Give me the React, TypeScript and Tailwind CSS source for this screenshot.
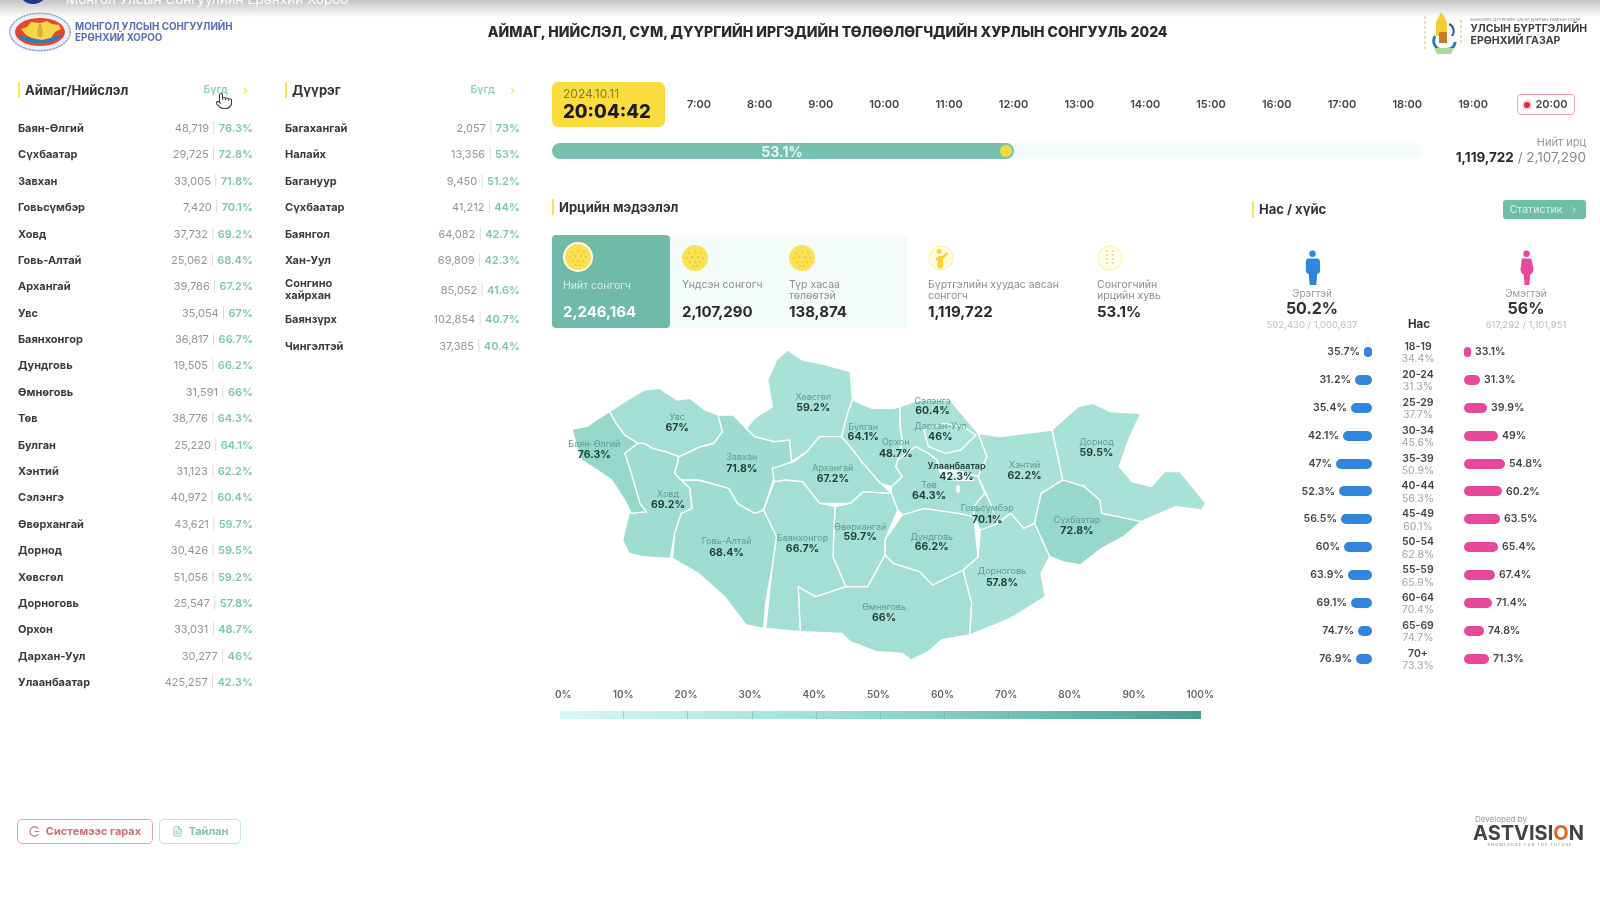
import { ChevronRight, FileText, Pointer } from "lucide-react"

const aimags = [
  ["Баян-Өлгий", "48,719", "76.3%"], ["Сүхбаатар", "29,725", "72.8%"], ["Завхан", "33,005", "71.8%"],
  ["Говьсүмбэр", "7,420", "70.1%"], ["Ховд", "37,732", "69.2%"], ["Говь-Алтай", "25,062", "68.4%"],
  ["Архангай", "39,786", "67.2%"], ["Увс", "35,054", "67%"], ["Баянхонгор", "36,817", "66.7%"],
  ["Дундговь", "19,505", "66.2%"], ["Өмнөговь", "31,591", "66%"], ["Төв", "38,776", "64.3%"],
  ["Булган", "25,220", "64.1%"], ["Хэнтий", "31,123", "62.2%"], ["Сэлэнгэ", "40,972", "60.4%"],
  ["Өвөрхангай", "43,621", "59.7%"], ["Дорнод", "30,426", "59.5%"], ["Хөвсгөл", "51,056", "59.2%"],
  ["Дорноговь", "25,547", "57.8%"], ["Орхон", "33,031", "48.7%"], ["Дархан-Уул", "30,277", "46%"],
  ["Улаанбаатар", "425,257", "42.3%"],
]

const districts = [
  ["Багахангай", "2,057", "73%"], ["Налайх", "13,356", "53%"], ["Багануур", "9,450", "51.2%"],
  ["Сүхбаатар", "41,212", "44%"], ["Баянгол", "64,082", "42.7%"], ["Хан-Уул", "69,809", "42.3%"],
  ["Сонгино хайрхан", "85,052", "41.6%"], ["Баянзүрх", "102,854", "40.7%"], ["Чингэлтэй", "37,385", "40.4%"],
]

const hours = ["7:00", "8:00", "9:00", "10:00", "11:00", "12:00", "13:00", "14:00", "15:00", "16:00", "17:00", "18:00", "19:00"]

const ages = [
  { m: "35.7%", mw: 8, a: "18-19", t: "34.4%", f: "33.1%", fw: 7 },
  { m: "31.2%", mw: 17, a: "20-24", t: "31.3%", f: "31.3%", fw: 16 },
  { m: "35.4%", mw: 21, a: "25-29", t: "37.7%", f: "39.9%", fw: 23 },
  { m: "42.1%", mw: 29, a: "30-34", t: "45.6%", f: "49%", fw: 34 },
  { m: "47%", mw: 36, a: "35-39", t: "50.9%", f: "54.8%", fw: 41 },
  { m: "52.3%", mw: 33, a: "40-44", t: "56.3%", f: "60.2%", fw: 38 },
  { m: "56.5%", mw: 31, a: "45-49", t: "60.1%", f: "63.5%", fw: 36 },
  { m: "60%", mw: 28, a: "50-54", t: "62.8%", f: "65.4%", fw: 34 },
  { m: "63.9%", mw: 24, a: "55-59", t: "65.9%", f: "67.4%", fw: 31 },
  { m: "69.1%", mw: 21, a: "60-64", t: "70.4%", f: "71.4%", fw: 28 },
  { m: "74.7%", mw: 14, a: "65-69", t: "74.7%", f: "74.8%", fw: 20 },
  { m: "76.9%", mw: 16, a: "70+", t: "73.3%", f: "71.3%", fw: 25 },
]

// map points are read off the zoomed crop (x / 2.306, y / 3)
const regions = [
  { fill: "#a8e2d7", d: "1155,270 1215,200 1250,190 1290,215 1360,220 1335,290 1310,380 1340,425 1385,440 1415,395 1450,395 1510,490 1500,510 1440,500 1360,545 1270,520 1265,480 1230,440 1180,420 1165,330" },
  { fill: "#96d8ca", d: "1180,420 1230,440 1265,480 1270,520 1360,545 1320,590 1270,625 1220,675 1180,665 1150,650 1115,550 1130,460" },
  { fill: "#a8e2d7", d: "985,280 1035,290 1155,270 1165,330 1180,420 1130,460 1115,550 1090,565 1060,520 1030,550 1010,480 985,410 1005,350" },
  { fill: "#a8e2d7", d: "1090,565 1115,550 1150,650 1130,700 1140,770 1060,835 965,885 970,790 950,690 985,650 990,570 1030,550 1060,520" },
  { fill: "#a3dfd3", d: "570,740 610,770 680,740 730,740 770,645 790,670 850,695 880,735 950,690 970,790 965,885 900,900 870,935 830,960 810,940 750,935 690,905 670,880 575,875" },
  { fill: "#a3dfd3", d: "810,525 860,505 940,520 975,530 985,650 950,690 880,735 850,695 790,670 770,645 770,600" },
  { fill: "#a5e0d4", d: "655,500 690,490 720,455 785,460 800,510 770,600 770,645 730,740 680,740 650,650" },
  { fill: "#a3dfd3", d: "490,510 515,425 540,420 580,425 620,490 655,500 650,650 680,740 610,770 570,740 575,875 495,865 510,680 520,590" },
  { fill: "#a0ddd1", d: "300,420 340,420 370,430 410,445 430,490 470,520 490,510 520,590 510,680 495,790 490,865 450,855 400,770 340,700 280,655 285,580 300,520 325,505 320,445" },
  { fill: "#9edccf", d: "385,225 420,225 450,265 470,290 515,305 550,300 555,365 520,385 510,430 490,510 470,520 430,490 410,445 370,430 340,420 300,420 285,400 295,350 345,320 375,310 395,275" },
  { fill: "#a0ddd1", d: "170,340 200,310 215,310 235,325 265,335 295,350 285,400 300,420 320,445 325,505 300,520 285,580 275,655 210,650 180,640 165,600 180,520 220,515 205,490 185,400" },
  { fill: "#a3dfd3", d: "135,215 170,185 215,150 250,145 290,180 320,175 355,210 385,225 395,275 375,310 345,320 295,350 265,335 235,325 215,310 200,310 170,285 150,250" },
  { fill: "#95d8c9", d: "48,268 85,258 110,235 135,215 150,250 170,285 200,310 170,340 185,400 205,490 220,515 185,520 170,480 140,420 100,385 70,360 60,320" },
  { fill: "#a8e2d7", d: "450,265 470,235 510,200 500,120 520,60 545,30 580,60 620,70 690,95 695,180 685,215 670,290 620,290 590,335 555,365 550,300 515,305 470,290" },
  { fill: "#a3dfd3", d: "510,385 560,365 590,335 620,290 670,290 690,320 720,370 760,430 785,460 720,455 690,490 620,490 580,425 540,420 515,425" },
  { fill: "#a5e0d4", d: "695,180 740,205 790,205 805,200 805,260 810,300 800,360 795,380 810,410 785,440 760,430 720,370 690,320 670,290 685,215" },
  { fill: "#a8e2d7", d: "805,200 850,180 920,180 985,280 1005,350 985,410 945,395 895,390 890,360 870,340 840,320 800,360 810,300 805,260" },
  { fill: "#ade4d9", d: "860,270 905,250 950,260 980,285 945,330 910,340 870,320" },
  { fill: "#a5e0d4", d: "785,440 810,410 795,380 800,360 840,320 870,340 890,360 895,390 945,395 985,410 1000,460 975,500 975,530 940,520 860,505 810,525 800,510 785,460" },
  { fill: "#dff5f0", d: "895,390 945,395 975,420 955,422 905,418" },
  { fill: "#9edccf", d: "975,500 1000,460 1010,480 1030,550 990,570 975,530" },
]

const labels = [
  ["Баян-Өлгий", "76.3%", 100, 310, 342], ["Увс", "67%", 291, 228, 262], ["Ховд", "69.2%", 270, 460, 492],
  ["Завхан", "71.8%", 440, 350, 384], ["Говь-Алтай", "68.4%", 405, 602, 636], ["Хөвсгөл", "59.2%", 605, 170, 203],
  ["Булган", "64.1%", 720, 258, 290], ["Сэлэнгэ", "60.4%", 880, 180, 212], ["Дархан-Уул", "46%", 898, 256, 288],
  ["Орхон", "48.7%", 795, 305, 340], ["Архангай", "67.2%", 650, 383, 416], ["Төв", "64.3%", 872, 432, 466],
  ["Говьсүмбэр", "70.1%", 1006, 503, 537], ["Хэнтий", "62.2%", 1092, 373, 406], ["Дорнод", "59.5%", 1258, 305, 338],
  ["Сүхбаатар", "72.8%", 1213, 538, 572], ["Баянхонгор", "66.7%", 580, 592, 624], ["Өвөрхангай", "59.7%", 713, 558, 590],
  ["Дундговь", "66.2%", 878, 588, 620], ["Дорноговь", "57.8%", 1040, 692, 726], ["Өмнөговь", "66%", 768, 800, 832],
] as const

const toPoints = (d: string) =>
  d.split(" ").map((p) => {
    const [x, y] = p.split(",").map(Number)
    return `${(x / 2.306).toFixed(1)},${y / 3}`
  }).join(" ")

function Sheaf({ size = 26 }: { size?: number }) {
  const dots = [[-6, -5], [0, -6], [6, -5], [-8, 0], [-3, -1], [3, -1], [8, 0], [-5, 4], [0, 4], [5, 4], [-2, 8], [2, 8]]
  return (
    <svg width={size} height={size} viewBox="-13 -13 26 26">
      <circle r="13" fill="#fbe254" />
      {dots.map(([x, y]) => (
        <circle key={`${x}${y}`} cx={x} cy={y} r="1" fill="#eec32a" />
      ))}
    </svg>
  )
}

function VoterIcon() {
  return (
    <svg width="26" height="26" viewBox="0 0 26 26">
      <circle cx="13" cy="13" r="12" fill="#fffbe0" stroke="#fdf09a" strokeWidth="1" />
      <path d="M11 9a2.5 2.5 0 1 1 .1 0zM8 13l3-2h3l5-4 1 2-5 5v8l-3 2-3-3 1-5-2-1z" fill="#f7d52e" />
    </svg>
  )
}

function RateIcon() {
  return (
    <svg width="26" height="26" viewBox="0 0 26 26">
      <circle cx="13" cy="13" r="12" fill="#fffdf0" stroke="#fdf3b0" strokeWidth="1.4" />
      <path d="M10 5v16M16 5v16" stroke="#f6e27a" strokeWidth="2" strokeDasharray="2 2" />
    </svg>
  )
}

function Person({ color, female }: { color: string; female?: boolean }) {
  return (
    <svg width="17" height="36" viewBox="0 0 18 38">
      <circle cx="9" cy="4" r="3.4" fill={color} />
      {female ? (
        <path d="M5 9h8c2 1 2 5 3 9 1 3 0 6-3 8l-1 11H7L6 26c-3-2-4-5-3-8 1-4 0-8 2-9z" fill={color} />
      ) : (
        <path d="M4 9h10c2 0 3 2 3 4v9c0 2-1 3-3 3l-1 12H6L5 25c-2 0-3-1-3-3v-9c0-2 1-4 2-4z" fill={color} />
      )}
    </svg>
  )
}

function ElectionLogo() {
  return (
    <svg width="64" height="40" viewBox="0 0 64 40">
      <ellipse cx="32" cy="20" rx="30.5" ry="19" fill="#eef1fa" stroke="#a9b6dc" strokeWidth="1" />
      <ellipse cx="32" cy="20" rx="30" ry="18.5" fill="none" stroke="#8fa0d2" strokeWidth="1.5" strokeDasharray="1.5 1.5" />
      <ellipse cx="32" cy="20" rx="25" ry="14" fill="#e5482c" />
      <path d="M9 22c5 12 41 12 46 0-8 5-38 5-46 0z" fill="#2b7ac4" />
      <path d="M13 17l6-2 4-5 9 1 7-2 5 3 7 1 2 4-6 3-4 6-9 2-10-2-6-3z" fill="#f9d648" />
      <path d="M32 11c-3 4-3 10-2 14h4c1-4 1-10-2-14z" fill="#e0ab3a" />
    </svg>
  )
}

function RegistryLogo() {
  return (
    <svg width="40" height="44" viewBox="0 0 40 44">
      <path d="M2 6v34M38 10v24" stroke="#d8dc8a" strokeWidth="1.5" strokeDasharray="3 2" />
      <path d="M18 2l3 4 3 6v14H13V12z" fill="#f5cf30" />
      <path d="M12 26c-4 8 2 14 8 14s12-2 12-8" fill="none" stroke="#2a7fb8" strokeWidth="3" />
      <path d="M26 14c5 2 6 8 3 12" fill="none" stroke="#2f5f9e" strokeWidth="2" />
      <rect x="16" y="22" width="8" height="11" fill="#c9792b" />
      <path d="M11 38h20l-3 6H14z" fill="#a9dba0" />
    </svg>
  )
}

function ExitIcon() {
  return (
    <svg width="11" height="11" viewBox="0 0 12 12" fill="none" stroke="currentColor" strokeWidth="1.3">
      <path d="M10 3a5 5 0 1 0 0 6M6 6h5" />
    </svg>
  )
}

function Heading({ text }: { text: string }) {
  return (
    <div className="flex h-[16px] items-center border-l-2 border-[#fbe254] pl-[5px] text-[13px] leading-none font-bold text-[#333]">
      {text}
    </div>
  )
}

function ListColumn({ title, rows }: { title: string; rows: string[][] }) {
  return (
    <div className="w-[235px]">
      <div className="flex items-center justify-between pr-[3px]">
        <Heading text={title} />
        <div className="flex items-center gap-[13px] text-[10.5px] font-semibold text-[#8fd0bd]">
          <span>Бүгд</span>
          <ChevronRight size={9} strokeWidth={3} className="text-[#fbe254]" />
        </div>
      </div>
      <div className="mt-[17px]">
        {rows.map(([name, count, pct]) => (
          <div key={name} className="flex min-h-[26.4px] items-center justify-between text-[11px]">
            <span className={name === "Сонгино хайрхан" ? "w-[60px] py-[5px] leading-[11.5px] font-bold text-[#3b3b3b]" : "font-bold text-[#3b3b3b]"}>{name}</span>
            <span className="text-[#959595]">
              {count} <span className="text-[#d8d8d8]">|</span> <span className="font-semibold text-[#7cc7b1]">{pct}</span>
            </span>
          </div>
        ))}
      </div>
    </div>
  )
}

function StatCard({ icon, label, value, className }: { icon: React.ReactNode; label: string; value: string; className: string }) {
  return (
    <div className={className}>
      <div className="flex h-[30px] items-center">{icon}</div>
      <div className="mt-[6px] h-[23px] text-[10.5px] leading-[11px] text-[#8d8d8d]">{label}</div>
      <div className="h-[20px] text-[15px] leading-[20px] font-bold text-[#2b2b2b]">{value}</div>
    </div>
  )
}

export default function App() {
  return (
    <div className="relative flex h-[901px] w-[1600px] flex-col overflow-hidden bg-white blur-[0.5px] font-['Inter','Noto_Sans',sans-serif]">
      <div className="absolute top-0 left-0 h-[17px] w-full bg-gradient-to-b from-[#c4c4c4] to-white/0">
        <div className="absolute -top-[26px] left-[18px] h-[30px] w-[30px] rounded-full bg-[#1f3a8a]" />
        <div className="absolute -top-[11px] left-[66px] text-[13.5px] text-white">Монгол Улсын Сонгуулийн Ерөнхий Хороо</div>
      </div>

      <header className="flex h-[62px] items-center justify-between pt-[1px] pr-[13px] pl-[8px]">
        <div className="flex items-center gap-[3px]">
          <ElectionLogo />
          <div className="text-[9.8px] leading-[11px] font-bold text-[#5a6cb5]">
            МОНГОЛ УЛСЫН СОНГУУЛИЙН
            <br />
            ЕРӨНХИЙ ХОРОО
          </div>
        </div>
        <h1 className="text-[14px] font-extrabold text-[#2b2b2b]">АЙМАГ, НИЙСЛЭЛ, СУМ, ДҮҮРГИЙН ИРГЭДИЙН ТӨЛӨӨЛӨГЧДИЙН ХУРЛЫН СОНГУУЛЬ 2024</h1>
        <div className="flex items-center gap-[8px]">
          <RegistryLogo />
          <div className="font-bold text-[#3d3d3d]">
            <div className="text-[4px] leading-[6px] font-normal text-[#777]">БАЯНЗҮРХ ДҮҮРГИЙН ЗАСАГ ДАРГЫН ТАМГЫН ГАЗАР</div>
            <div className="text-[10.5px] leading-[12px]">УЛСЫН БҮРТГЭЛИЙН</div>
            <div className="text-[10.5px] leading-[12px]">ЕРӨНХИЙ ГАЗАР</div>
          </div>
        </div>
      </header>

      <main className="flex flex-1 gap-[32px] pt-[20px] pl-[18px]">
        <div className="relative flex gap-[32px]">
          <ListColumn title="Аймаг/Нийслэл" rows={aimags} />
          <ListColumn title="Дүүрэг" rows={districts} />
          <Pointer size={18} className="absolute top-[10px] left-[197px] fill-white text-[#444]" strokeWidth={1.5} />
        </div>

        <div className="w-[1034px]">
          <div className="flex h-[45px] items-center gap-[22px]">
            <div className="h-[45px] w-[113px] rounded-[6px] bg-[#fbdc3f] pt-[6px] pl-[11px]">
              <div className="text-[12px] leading-[12px] text-[#8d7b22]">2024.10.11</div>
              <div className="text-[18.5px] leading-[22px] font-extrabold text-[#1c1c1c]">20:04:42</div>
            </div>
            <div className="flex flex-1 items-center gap-[29px] pr-[11px] text-[11px] font-semibold text-[#444]">
              <div className="flex flex-1 items-center justify-between">
                {hours.map((h) => (
                  <span key={h}>{h}</span>
                ))}
              </div>
              <span className="flex h-[21px] w-[58px] items-center justify-center gap-[5px] rounded-[4px] border border-[#e8a3ab]">
                <span className="h-[6px] w-[6px] rounded-full bg-[#e3263a] ring-2 ring-[#fbd4d8]" />
                20:00
              </span>
            </div>
          </div>

          <div className="mt-[9px] flex h-[30px] items-center justify-between">
            <div className="h-[16px] w-[870px] rounded-full bg-[#f3fcfb]">
              <div className="flex h-[16px] w-[462px] items-center rounded-full bg-[#78c2ad] pr-[2px]">
                <span className="flex-1 pl-[12px] text-center text-[14px] font-bold text-[#e4f6f0]">53.1%</span>
                <span className="h-[12px] w-[12px] rounded-full bg-[#f5d93f]" />
              </div>
            </div>
            <div className="text-right">
              <div className="text-[11px] leading-[13px] text-[#999]">Нийт ирц</div>
              <div className="text-[13.5px] leading-[17px] text-[#8a8a8a]">
                <span className="font-bold text-[#2b2b2b]">1,119,722</span> / 2,107,290
              </div>
            </div>
          </div>

          <div className="mt-[33px] flex gap-[16px]">
            <div className="w-[684px]">
              <Heading text="Ирцийн мэдээлэл" />
              <div className="mt-[20px] flex h-[93px]">
                <div className="flex w-[118px] flex-col rounded-[4px] bg-[#6fbba7] pt-[7px] pl-[11px]">
                  <div className="flex h-[30px] items-center">
                    <div className="rounded-full bg-[#fffbe6] p-[2px]">
                      <Sheaf />
                    </div>
                  </div>
                  <div className="mt-[8px] h-[22px] text-[10.5px] leading-[11px] text-[#d5f0e8]">Нийт сонгогч</div>
                  <div className="h-[20px] text-[15px] leading-[20px] font-bold text-white">2,246,164</div>
                </div>
                <div className="flex w-[237px] bg-[#f3fcfb]">
                  <StatCard className="w-[119px] pt-[8px] pl-[12px]" icon={<Sheaf />} label="Үндсэн сонгогч" value="2,107,290" />
                  <StatCard className="w-[118px] pt-[8px] pr-[30px]" icon={<Sheaf />} label="Түр хасаа төлөөтэй" value="138,874" />
                </div>
                <StatCard className="ml-[21px] w-[169px] pt-[8px] pr-[6px]" icon={<VoterIcon />} label="Бүртгэлийн хуудас авсан сонгогч" value="1,119,722" />
                <StatCard className="w-[80px] pt-[8px]" icon={<RateIcon />} label="Сонгогчийн ирцийн хувь" value="53.1%" />
              </div>

              <svg width="680" height="347" viewBox="0 0 680 347" className="mt-[12px] -ml-[1px]">
                {regions.map((r) => (
                  <polygon key={r.d} points={toPoints(r.d)} fill={r.fill} stroke="#fff" strokeWidth="1.3" strokeLinejoin="round" />
                ))}
                <ellipse cx="407" cy="149" rx="2" ry="4" fill="#fff" />
                {labels.map(([name, pct, x, y1, y2]) => (
                  <g key={name} textAnchor="middle" dominantBaseline="central">
                    <text x={x / 2.306} y={y1 / 3} fontSize="9" fill="#5e9d8e">{name}</text>
                    <text x={x / 2.306} y={y2 / 3} fontSize="10.5" fontWeight="700" fill="#1f3f39">{pct}</text>
                  </g>
                ))}
                <text x="405.5" y="125" textAnchor="middle" dominantBaseline="central" fontSize="9" fontWeight="600" fill="#1f3f39">Улаанбаатар</text>
                <text x="405.5" y="136" textAnchor="middle" dominantBaseline="central" fontSize="10.5" fontWeight="700" fill="#1f3f39">42.3%</text>
              </svg>

              <div className="w-[662px] pl-[3px]">
                <div className="flex h-[14px] justify-between text-[10px] leading-[14px] font-semibold text-[#666]">
                  {["0%", "10%", "20%", "30%", "40%", "50%", "60%", "70%", "80%", "90%", "100%"].map((t) => (
                    <span key={t}>{t}</span>
                  ))}
                </div>
                <div className="mt-[10px] ml-[5px] flex h-[8px] w-[641px] divide-x divide-[#6aa899]/50 bg-gradient-to-r from-[#d6faf6] via-[#92dacb] to-[#46a08d]">
                  {[0, 1, 2, 3, 4, 5, 6, 7, 8, 9].map((i) => (
                    <div key={i} className="flex-1" />
                  ))}
                </div>
              </div>
            </div>

            <div className="w-[334px] pt-[1px]">
              <div className="flex items-center justify-between">
                <div className="border-l-2 border-[#fbe254] py-[1px] pl-[5px] text-[13px] leading-[15px] font-bold text-[#333]">Нас / хүйс</div>
                <button className="flex h-[19px] w-[83px] items-center justify-center gap-[7px] rounded-[3px] bg-[#6fbfa8] text-[10.5px] text-[#d8f2ea]">
                  Статистик
                  <ChevronRight size={10} strokeWidth={2} />
                </button>
              </div>

              <div className="mt-[31px] flex">
                <div className="flex w-[120px] flex-col items-center">
                  <Person color="#2f86de" />
                  <div className="mt-[1px] text-[10px] leading-[12px] text-[#999]">Эрэгтэй</div>
                  <div className="text-[16px] leading-[19px] font-bold text-[#333]">50.2%</div>
                  <div className="text-[9.5px] leading-[13px] whitespace-nowrap text-[#bbb]">502,430 / 1,000,637</div>
                </div>
                <div className="flex w-[94px] items-end justify-center text-[11.5px] leading-[14px] font-bold text-[#333]">Нас</div>
                <div className="flex w-[120px] flex-col items-center">
                  <Person color="#e8479b" female />
                  <div className="mt-[1px] text-[10px] leading-[12px] text-[#999]">Эмэгтэй</div>
                  <div className="text-[16px] leading-[19px] font-bold text-[#333]">56%</div>
                  <div className="text-[9.5px] leading-[13px] whitespace-nowrap text-[#bbb]">617,292 / 1,101,951</div>
                </div>
              </div>

              <div className="mt-[7px]">
                {ages.map((r) => (
                  <div key={r.a} className="flex h-[27.9px] items-center text-[10.5px] font-semibold text-[#444]">
                    <div className="flex w-[120px] items-center justify-end gap-[4px]">
                      {r.m}
                      <span className="h-[10px] rounded-full bg-[#3186dc]" style={{ width: r.mw }} />
                    </div>
                    <div className="w-[92px] pt-[3px] text-center leading-[12.5px]">
                      <div>{r.a}</div>
                      <div className="font-normal text-[#a5a5a5]">{r.t}</div>
                    </div>
                    <div className="flex items-center gap-[4px]">
                      <span className="h-[10px] rounded-full bg-[#e8489a]" style={{ width: r.fw }} />
                      {r.f}
                    </div>
                  </div>
                ))}
              </div>
            </div>
          </div>
        </div>
      </main>

      <footer className="mb-[52px] flex h-[36px] items-center justify-between pr-[13px] pl-[17px]">
        <div className="flex gap-[6px]">
          <button className="flex h-[25px] w-[136px] items-center justify-center gap-[6px] rounded-[5px] border border-[#e5a4a4] text-[11px] font-bold text-[#cf6f76]">
            <ExitIcon /> Системээс гарах
          </button>
          <button className="flex h-[25px] w-[82px] items-center justify-center gap-[6px] rounded-[5px] border border-[#bfe4dc] text-[11px] font-bold text-[#86c2b2]">
            <FileText size={11} /> Тайлан
          </button>
        </div>
        <div className="w-[114px]">
          <div className="pl-[2px] text-[8px] leading-[9px] text-[#999]">Developed by</div>
          <div className="text-[20px] leading-[18px] font-bold whitespace-nowrap text-[#444]">
            ASTVISI<span className="text-[#e8622c]">O</span>N
          </div>
          <div className="text-center text-[4px] leading-[6px] tracking-[1px] whitespace-nowrap text-[#888]">KNOWLEDGE FOR THE FUTURE</div>
        </div>
      </footer>
    </div>
  )
}
